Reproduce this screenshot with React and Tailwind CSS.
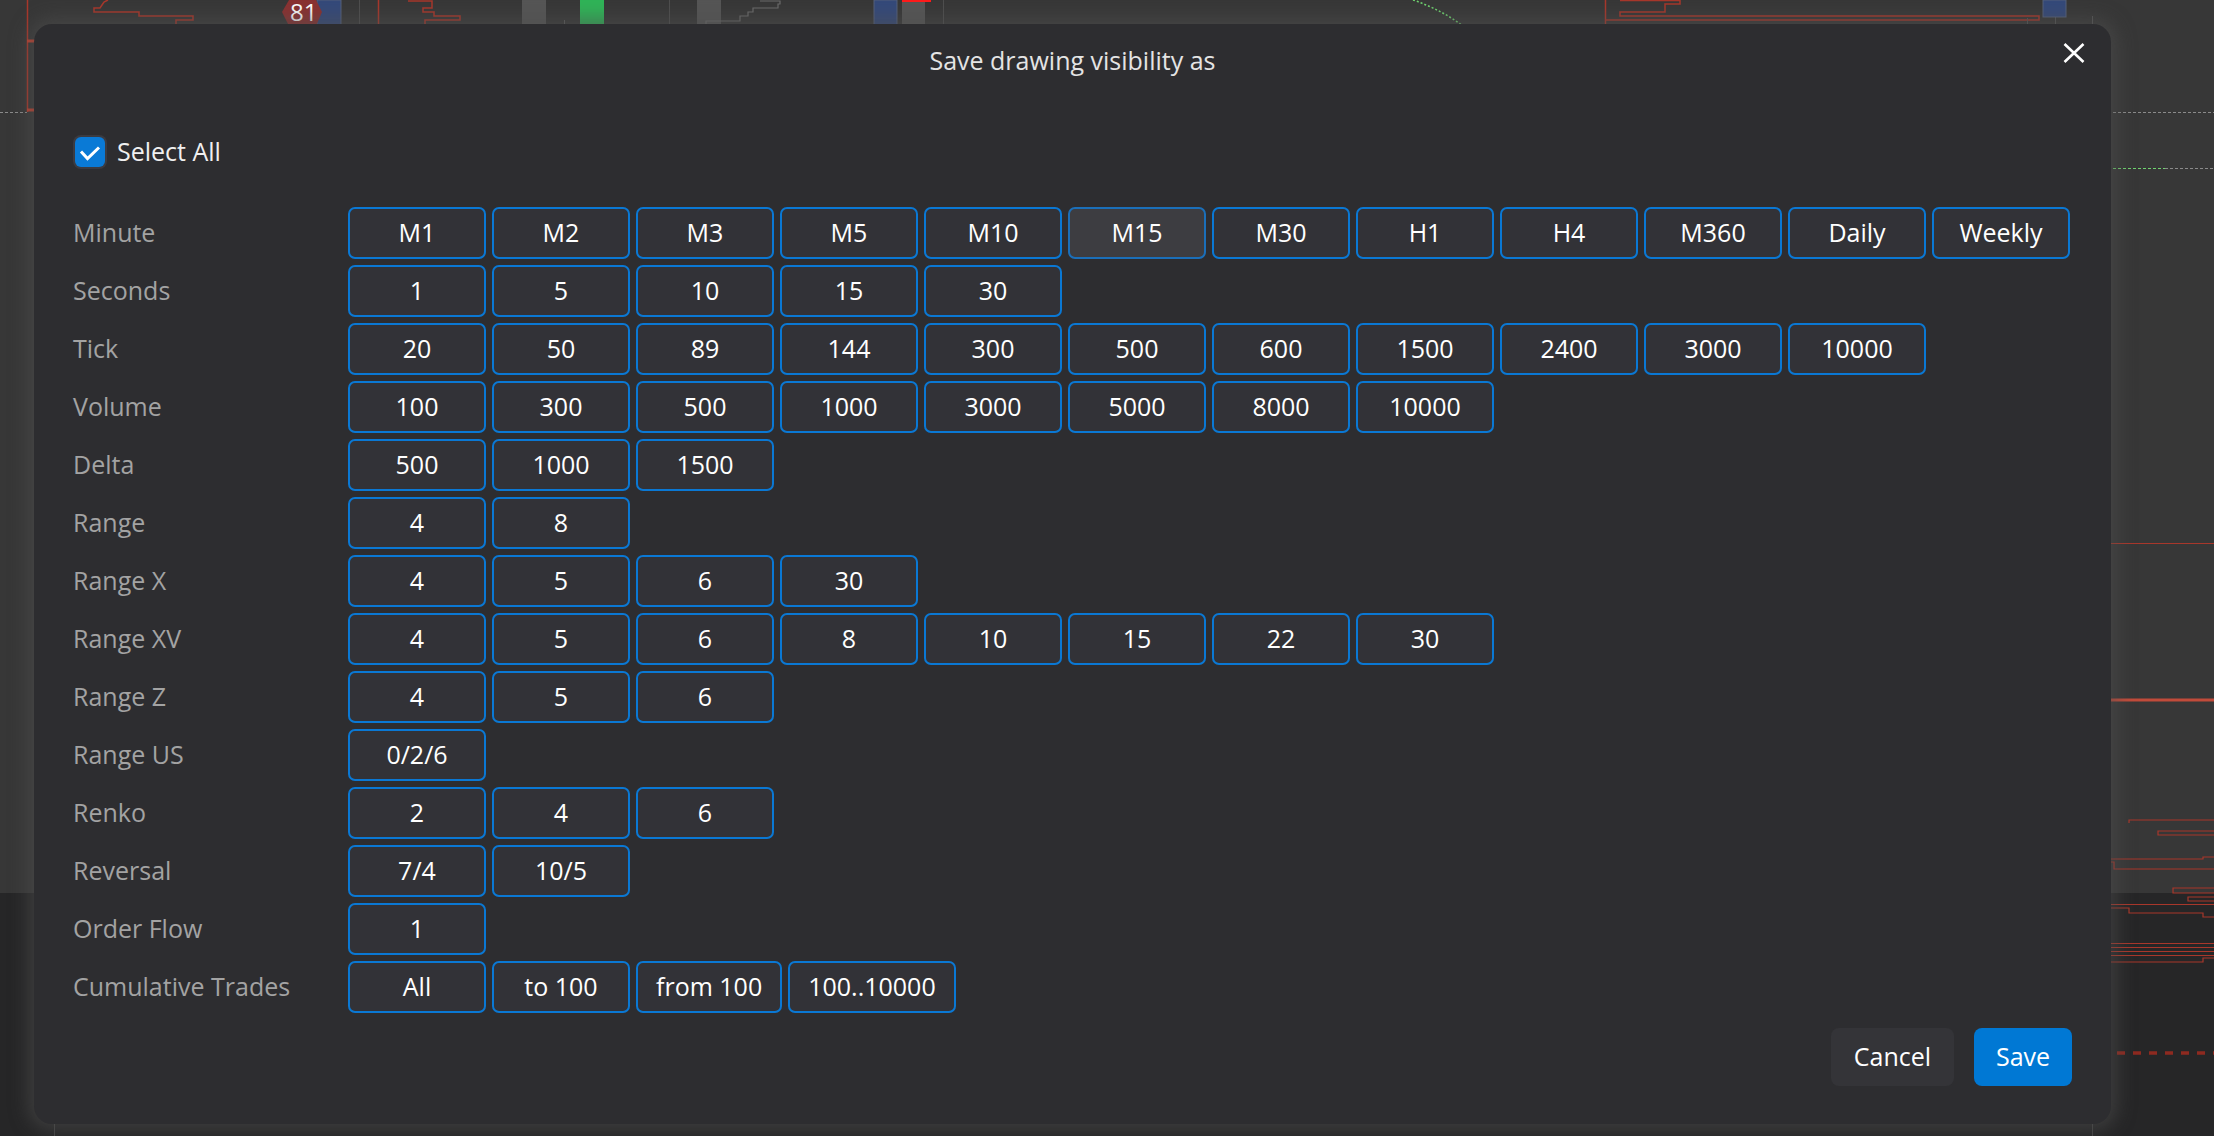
import React from "react";

const rows = [
  ["Minute", ["M1", "M2", "M3", "M5", "M10", "M15", "M30", "H1", "H4", "M360", "Daily", "Weekly"]],
  ["Seconds", ["1", "5", "10", "15", "30"]],
  ["Tick", ["20", "50", "89", "144", "300", "500", "600", "1500", "2400", "3000", "10000"]],
  ["Volume", ["100", "300", "500", "1000", "3000", "5000", "8000", "10000"]],
  ["Delta", ["500", "1000", "1500"]],
  ["Range", ["4", "8"]],
  ["Range X", ["4", "5", "6", "30"]],
  ["Range XV", ["4", "5", "6", "8", "10", "15", "22", "30"]],
  ["Range Z", ["4", "5", "6"]],
  ["Range US", ["0/2/6"]],
  ["Renko", ["2", "4", "6"]],
  ["Reversal", ["7/4", "10/5"]],
  ["Order Flow", ["1"]],
  ["Cumulative Trades", ["All", "to 100", "from 100", "100..10000"]],
];

const red = "#a8372b";

function ChartBackdrop() {
  return (
    <svg className="absolute inset-0" width="2214" height="1136" viewBox="0 0 2214 1136">
      <rect x="0" y="0" width="2214" height="893" fill="#373737" />
      <rect x="0" y="893" width="2214" height="243" fill="#262627" />

      {/* left edge */}
      <line x1="27.5" y1="0" x2="27.5" y2="112" stroke={red} strokeWidth="1.5" />
      <line x1="27" y1="41" x2="36" y2="41" stroke="#c0402f" strokeWidth="3" />
      <line x1="27" y1="110" x2="36" y2="110" stroke="#c0402f" strokeWidth="3" />
      <line x1="0" y1="112.5" x2="27" y2="112.5" stroke="#8a8a8a" strokeWidth="1" strokeDasharray="3 2" />
      <line x1="54.5" y1="1124" x2="54.5" y2="1136" stroke="#444" strokeWidth="1" />

      {/* top strip */}
      <path d="M108 0 L104 2 L102 5 L100 8 L94 8 L94 12 L139 12 L139 16 L193 16 L193 20 L176 20 L176 26" fill="none" stroke={red} strokeWidth="1.5" />
      <rect x="317" y="0" width="24" height="30" fill="#34497a" stroke="#55607a" strokeWidth="1" />
      <path d="M282 12 L289 0 L316 0 L322 12 L316 26 L289 26 Z" fill="#8a3131" />
      <text x="290" y="21" fill="#ffffff" fontSize="24" fontFamily="Open Sans, sans-serif">81</text>
      <line x1="359.5" y1="0" x2="359.5" y2="26" stroke="#4e4e4e" strokeWidth="1" />
      <line x1="378.5" y1="0" x2="378.5" y2="26" stroke={red} strokeWidth="1.5" />
      <path d="M408 1 L432 1 L432 8 L423 8 L423 12 L434 12 L434 16 L460 16 L460 20 L425 20 L425 26" fill="none" stroke={red} strokeWidth="1.5" />
      <rect x="522" y="0" width="24" height="30" fill="#555555" />
      <line x1="564.5" y1="20" x2="564.5" y2="26" stroke="#5a5a5a" strokeWidth="1" />
      <rect x="580" y="0" width="24" height="30" fill="#2fb457" />
      <line x1="669.5" y1="0" x2="669.5" y2="26" stroke="#4e4e4e" strokeWidth="1" />
      <rect x="697" y="0" width="24" height="30" fill="#555555" />
      <path d="M706 26 L706 21 L740 21 L740 16 L748 16 L748 12 L753 12 L753 8 L778 8 L778 4 L780 4 L780 1 L760 1" fill="none" stroke="#6a6a6a" strokeWidth="1.2" />
      <rect x="874" y="0" width="23" height="30" fill="#34497a" stroke="#55607a" strokeWidth="1" />
      <rect x="902" y="0" width="23" height="30" fill="#555555" />
      <rect x="902" y="0" width="29" height="2" fill="#ff1a1a" />
      <line x1="943.5" y1="0" x2="943.5" y2="26" stroke="#4e4e4e" strokeWidth="1" />
      <path d="M1413 0 Q1440 9 1463 26" fill="none" stroke="#6fd36f" strokeWidth="1.5" strokeDasharray="2 2" />
      <line x1="1605.5" y1="0" x2="1605.5" y2="26" stroke={red} strokeWidth="1.5" />
      <path d="M1620 0.5 L1680 0.5 L1680 4 L1665 4 L1665 12 L1620 12 L1620 16 L2039 16 L2039 20 L1605 20" fill="none" stroke={red} strokeWidth="1.5" />
      <line x1="2027.5" y1="18" x2="2027.5" y2="26" stroke="#555" strokeWidth="1" />
      <line x1="2055.5" y1="17" x2="2055.5" y2="26" stroke="#555" strokeWidth="1" />
      <rect x="2043" y="0" width="23" height="17" fill="#34497a" stroke="#55607a" strokeWidth="1" />
      <line x1="2092.5" y1="16" x2="2092.5" y2="26" stroke="#555" strokeWidth="1" />
      <line x1="2092.5" y1="1124" x2="2092.5" y2="1136" stroke="#444" strokeWidth="1" />

      {/* right strip */}
      <line x1="2113" y1="112.5" x2="2214" y2="112.5" stroke="#8a8a8a" strokeWidth="1" strokeDasharray="3 2" />
      <line x1="2113" y1="168.5" x2="2165" y2="168.5" stroke="#6fd36f" strokeWidth="1" strokeDasharray="3 2" />
      <line x1="2165" y1="168.5" x2="2214" y2="168.5" stroke="#8a8a8a" strokeWidth="1" strokeDasharray="3 2" />
      <line x1="2110" y1="543.5" x2="2214" y2="543.5" stroke={red} strokeWidth="1" />
      <line x1="2110" y1="700" x2="2214" y2="700" stroke="#c14b3a" strokeWidth="3" />
      <path d="M2129 823 L2129 820 L2214 820" fill="none" stroke={red} strokeWidth="1.2" />
      <path d="M2214 831 L2158 831 L2158 835 L2214 835" fill="none" stroke={red} strokeWidth="1.2" />
      <path d="M2110 859 L2203 859 L2203 857 L2214 857" fill="none" stroke={red} strokeWidth="1.2" />
      <path d="M2110 862 L2114 862 L2114 869 L2214 869" fill="none" stroke={red} strokeWidth="1.2" />
      <path d="M2214 888 L2173 888 L2173 893 L2214 893" fill="none" stroke={red} strokeWidth="1.2" />
      <path d="M2214 897 L2188 897 L2188 901 L2214 901" fill="none" stroke={red} strokeWidth="1.2" />
      <line x1="2110" y1="904.5" x2="2214" y2="904.5" stroke={red} strokeWidth="1" />
      <path d="M2110 908 L2129 908 L2129 913 L2203 913 L2203 917 L2214 917" fill="none" stroke={red} strokeWidth="1.2" />
      <line x1="2110" y1="943.5" x2="2214" y2="943.5" stroke={red} strokeWidth="1" />
      <line x1="2110" y1="947.5" x2="2214" y2="947.5" stroke={red} strokeWidth="1" />
      <line x1="2110" y1="951.5" x2="2214" y2="951.5" stroke={red} strokeWidth="1" />
      <line x1="2110" y1="955.5" x2="2214" y2="955.5" stroke={red} strokeWidth="1" />
      <path d="M2110 962 L2203 962 L2203 958 L2214 958" fill="none" stroke={red} strokeWidth="1.2" />
      <line x1="2117" y1="1053" x2="2214" y2="1053" stroke="#8e2a20" strokeWidth="3.5" strokeDasharray="8 8" />
    </svg>
  );
}

function TfButton({ label, hover }) {
  return (
    <button
      type="button"
      className={
        hover
          ? "h-[52px] min-w-[138px] rounded-[7px] border-2 border-[#1b6fb9] bg-[#3d3d41] px-[18px] text-[25px] leading-none text-white"
          : "h-[52px] min-w-[138px] rounded-[7px] border-2 border-[#0a78d4] bg-[#323237] px-[18px] text-[25px] leading-none text-white"
      }
    >
      {label}
    </button>
  );
}

export default function App() {
  return (
    <div className="relative h-[1136px] w-[2214px] overflow-hidden bg-[#373737] font-['Open_Sans',sans-serif]">
      <ChartBackdrop />

      <div className="absolute left-[34px] top-[24px] flex h-[1100px] w-[2077px] flex-col rounded-[18px] bg-[#2d2d30] shadow-[0_0_18px_6px_rgba(80,80,80,0.55)]">
        <div className="relative flex h-[74px] items-center justify-center">
          <h2 className="text-[25px] font-normal text-[#e4e4e4]">Save drawing visibility as</h2>
          <button type="button" className="absolute right-[26px] top-[19px] flex h-[20px] w-[22px] items-center justify-center">
            <svg width="22" height="20" viewBox="0 0 22 20">
              <path d="M1.5 1 L20.5 19 M20.5 1 L1.5 19" stroke="#ffffff" strokeWidth="2.6" strokeLinecap="butt" />
            </svg>
          </button>
        </div>

        <div className="mt-[35px] flex items-center gap-[10px] pl-[39px]">
          <span className="flex h-[34px] w-[34px] items-center justify-center rounded-[8px] bg-[#3b3b41]">
            <span className="flex h-[30px] w-[30px] items-center justify-center rounded-[6px] bg-[#0a7ad6]">
              <svg width="30" height="30" viewBox="0 0 30 30">
                <polyline points="6,14.5 12.5,21.5 24,10.5" fill="none" stroke="#ffffff" strokeWidth="3" strokeLinejoin="miter" />
              </svg>
            </span>
          </span>
          <span className="text-[25px] text-[#f0f0f0]">Select All</span>
        </div>

        <div className="mt-[36px] flex flex-col gap-[6px] pl-[39px]">
          {rows.map(([name, items]) => (
            <div key={name} className="flex items-center">
              <span className="w-[275px] text-[25px] text-[#a3a3a3]">{name}</span>
              <div className="flex gap-[6px]">
                {items.map((item) => (
                  <TfButton key={item} label={item} hover={name === "Minute" && item === "M15"} />
                ))}
              </div>
            </div>
          ))}
        </div>

        <div className="mt-auto flex justify-end gap-[20px] pb-[38px] pr-[39px]">
          <button type="button" className="h-[58px] w-[123px] rounded-[8px] bg-[#343438] text-[25px] text-white">
            Cancel
          </button>
          <button type="button" className="h-[58px] w-[98px] rounded-[8px] bg-[#0078d4] text-[25px] text-white">
            Save
          </button>
        </div>
      </div>
    </div>
  );
}
